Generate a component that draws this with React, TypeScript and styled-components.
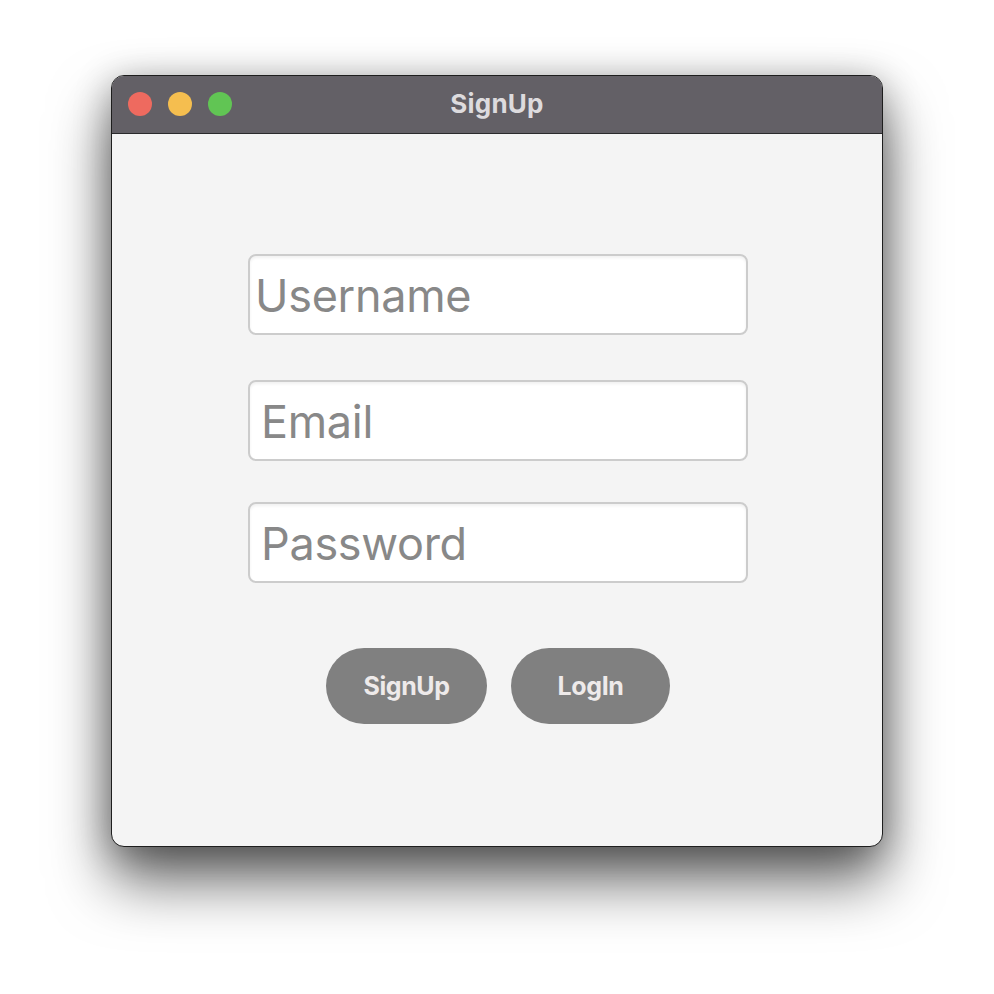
import React from 'react';
import styled, { createGlobalStyle } from 'styled-components';

const GlobalStyle = createGlobalStyle`
  html, body {
    margin: 0;
    padding: 0;
    background: #ffffff;
  }
  body {
    font-family: Inter, 'Noto Sans', sans-serif;
  }
`;

const Page = styled.div`
  width: 994px;
  height: 994px;
  padding: 75px 0 0 111px;
  box-sizing: border-box;
`;

const Window = styled.div`
  width: 772px;
  height: 772px;
  box-sizing: border-box;
  border: 1px solid #1e1e1e;
  border-radius: 13px;
  overflow: hidden;
  background: #f4f4f4;
  display: flex;
  flex-direction: column;
  box-shadow: 0 34px 60px rgba(0, 0, 0, 0.6), 0 6px 36px rgba(0, 0, 0, 0.3);
`;

const TitleBar = styled.div`
  position: relative;
  height: 57px;
  flex-shrink: 0;
  background: #636066;
  border-bottom: 1px solid #2a2a2c;
  display: flex;
  align-items: center;
  justify-content: center;
`;

const Lights = styled.div`
  position: absolute;
  left: 16px;
  top: 16px;
  display: flex;
  gap: 16px;
`;

const Light = styled.span<{ $color: string }>`
  width: 24px;
  height: 24px;
  border-radius: 50%;
  background: ${p => p.$color};
`;

const Title = styled.div`
  color: #dddbde;
  font-size: 26px;
  font-weight: 700;
  letter-spacing: 0.2px;
  margin-top: -2px;
`;

const Content = styled.div`
  display: flex;
  flex-direction: column;
  align-items: center;
  padding-top: 120px;
`;

const Field = styled.input<{ $gap: number; $indent: number }>`
  width: 500px;
  height: 81px;
  box-sizing: border-box;
  margin-bottom: ${p => p.$gap}px;
  margin-left: 2px;
  border: 2px solid #cccccc;
  border-radius: 8px;
  background: #ffffff;
  padding: 2px 0 0 ${p => p.$indent}px;
  font-family: Inter, 'Noto Sans', sans-serif;
  font-size: 45px;
  letter-spacing: -0.3px;
  color: #333;
  outline: none;
  box-shadow: inset 0 2px 3px rgba(0, 0, 0, 0.06);
  &::placeholder {
    color: #888888;
  }
`;

const Buttons = styled.div`
  display: flex;
  gap: 24px;
  margin-top: 24px;
  margin-left: 2px;
`;

const Pill = styled.button<{ $width: number }>`
  width: ${p => p.$width}px;
  height: 76px;
  border: none;
  border-radius: 38px;
  background: #808080;
  color: #eeeaea;
  font-family: Inter, 'Noto Sans', sans-serif;
  font-size: 25px;
  font-weight: 700;
  letter-spacing: -0.4px;
  cursor: pointer;
`;

export default function App() {
  return (
    <>
      <GlobalStyle />
      <Page>
        <Window>
          <TitleBar>
            <Lights>
              <Light $color="#ee6a5f" />
              <Light $color="#f5be4f" />
              <Light $color="#61c554" />
            </Lights>
            <Title>SignUp</Title>
          </TitleBar>
          <Content>
            <Field placeholder="Username" $gap={45} $indent={5} />
            <Field placeholder="Email" $gap={41} $indent={11} />
            <Field placeholder="Password" $gap={41} $indent={11} />
            <Buttons>
              <Pill $width={161}>SignUp</Pill>
              <Pill $width={159}>LogIn</Pill>
            </Buttons>
          </Content>
        </Window>
      </Page>
    </>
  );
}
